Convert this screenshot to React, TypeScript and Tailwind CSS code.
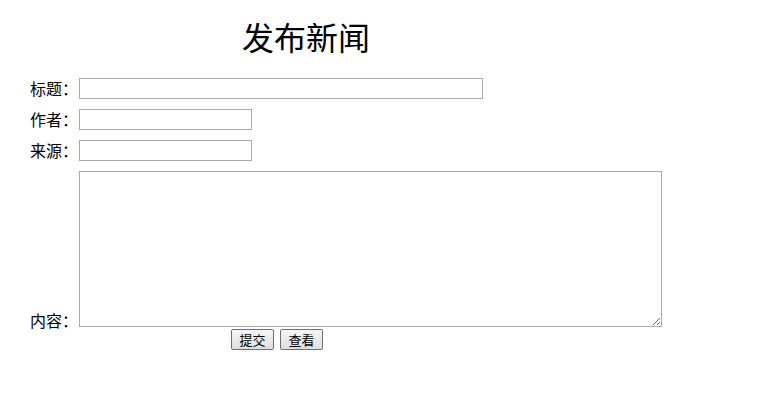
const cjk = { fontFamily: '"Noto Sans CJK SC", "Noto Sans", sans-serif' };

export default function App() {
  return (
    <div className="min-h-[402px] w-[763px] bg-white text-black" style={cjk}>
      <div className="w-[612px] pt-[17px] text-center text-[32px] leading-[38px] font-normal">
        发布新闻
      </div>

      <form className="mt-[23px] flex flex-col gap-[10px] pl-[30px]" onSubmit={e => e.preventDefault()}>
        <div className="flex h-[21px] items-center">
          <label className="w-[49px] text-[16px] leading-[21px]">标题：</label>
          <input type="text" className="h-[21px] w-[404px] border border-[#a9a9a9] bg-white outline-none" />
        </div>
        <div className="flex h-[21px] items-center">
          <label className="w-[49px] text-[16px] leading-[21px]">作者：</label>
          <input type="text" className="h-[21px] w-[173px] border border-[#a9a9a9] bg-white outline-none" />
        </div>
        <div className="flex h-[21px] items-center">
          <label className="w-[49px] text-[16px] leading-[21px]">来源：</label>
          <input type="text" className="h-[21px] w-[173px] border border-[#a9a9a9] bg-white outline-none" />
        </div>
        <div className="flex items-end">
          <label className="mb-[-4px] w-[49px] text-[16px] leading-[21px]">内容：</label>
          <textarea className="h-[156px] w-[583px] resize border border-[#a9a9a9] bg-white outline-none" />
        </div>
      </form>

      <div className="mt-[2px] flex gap-[6px] pl-[231px]">
        <button className="h-[21px] w-[43px] rounded-[2px] border border-[#707070] bg-gradient-to-b from-[#f6f6f6] to-[#dedede] text-[13px] leading-[19px]">
          提交
        </button>
        <button className="h-[21px] w-[43px] rounded-[2px] border border-[#707070] bg-gradient-to-b from-[#f6f6f6] to-[#dedede] text-[13px] leading-[19px]">
          查看
        </button>
      </div>
    </div>
  );
}
